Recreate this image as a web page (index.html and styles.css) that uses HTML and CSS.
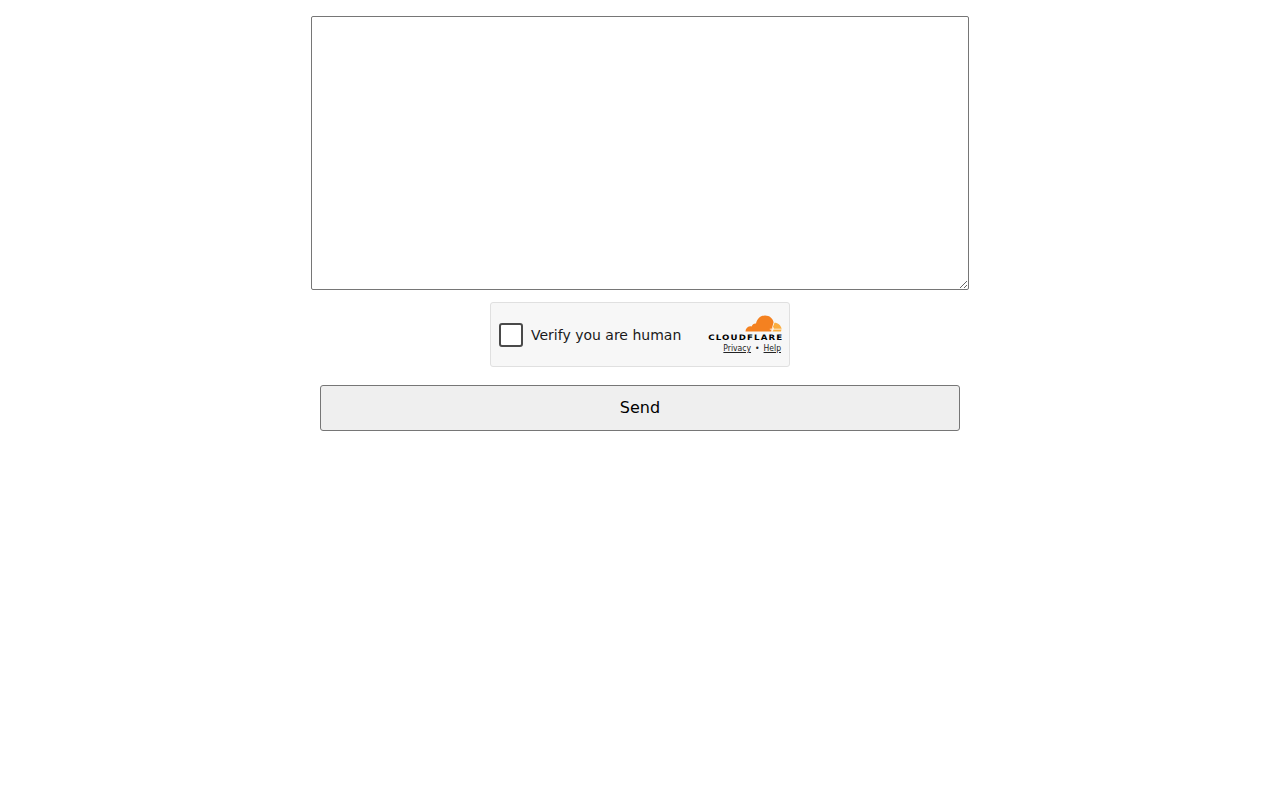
FILE: index.html
```html
<!DOCTYPE html>
<html lang="en">
<head>
<meta charset="utf-8">
<title>Send</title>
<link rel="stylesheet" href="styles.css">
</head>
<body>
<form class="form">
  <textarea class="message"></textarea>
  <div class="widget">
    <label class="verify">
      <span class="box"></span>
      <span class="verify-text">Verify you are human</span>
    </label>
    <div class="brand">
      <svg class="cloud" width="37" height="17" viewBox="0 0 37 17" aria-hidden="true">
        <path fill="#f48120" d="M0.5 16.5 C0.5 13.6 2.5 11.4 5 11.2 C5.6 11.2 6.2 11.3 6.6 11.5 C7.4 9.4 9 8.4 11 8.6 C12 3.8 15.6 0.5 20 0.5 C24.6 0.5 27.8 3.4 28.6 7.2 L27.4 11.6 L26 16.5 Z"/>
        <path fill="#faad3f" d="M29.5 7.8 C33 7.8 36 10.4 36.6 13.8 L36 16.5 L26.6 16.5 L27.4 14 C27.8 12.8 28.2 11 29.5 7.8 Z"/>
        <path fill="#fff" d="M26.9 16.5 L28.1 12.4 L28.9 12.4 L27.9 16.5 Z M24.8 13.7 L36.8 13.7 L36.8 14.4 L24.8 14.4 Z"/>
      </svg>
      <div class="wordmark">CLOUDFLARE</div>
      <div class="links"><a class="link" href="#">Privacy</a><span class="dot">•</span><a class="link" href="#">Help</a></div>
    </div>
  </div>
  <button class="send" type="button">Send</button>
</form>
</body>
</html>
```
FILE: styles.css
```css
html, body {
  margin: 0;
  background: #fff;
}
.form {
  display: flex;
  flex-direction: column;
  align-items: center;
  padding-top: 16px;
  font-family: "DejaVu Sans", sans-serif;
}
.message {
  display: block;
  box-sizing: border-box;
  width: 658px;
  height: 274px;
  margin: 0;
  padding: 2px;
  border: 1px solid #767676;
  border-radius: 2px;
  background: #fff;
}
.widget {
  box-sizing: border-box;
  display: flex;
  justify-content: space-between;
  align-items: center;
  width: 300px;
  height: 65px;
  margin-top: 12px;
  padding: 0 7px 0 8px;
  background: #f7f7f7;
  border: 1px solid #e0e0e0;
  border-radius: 3px;
}
.verify {
  display: flex;
  align-items: center;
  gap: 8px;
}
.box {
  box-sizing: border-box;
  width: 24px;
  height: 24px;
  background: #fff;
  border: 2px solid #4a4a4a;
  border-radius: 3px;
}
.verify-text {
  font-size: 14px;
  color: #1a1a1a;
}
.brand {
  display: flex;
  flex-direction: column;
  align-items: flex-end;
  width: 75px;
  padding-bottom: 1px;
}
.cloud {
  display: block;
  margin-right: 0;
}
.wordmark {
  margin-top: 1px;
  margin-right: -1px;
  font-size: 7.5px;
  line-height: 9px;
  font-weight: 700;
  letter-spacing: 1px;
  color: #000;
  white-space: nowrap;
  transform: scaleX(1.15);
  transform-origin: right center;
}
.links {
  display: flex;
  align-items: center;
  gap: 4px;
  margin-top: 1px;
  margin-right: 1px;
  font-family: "DejaVu Sans Condensed", "DejaVu Sans", sans-serif;
  font-stretch: condensed;
  font-size: 8.5px;
  line-height: 10px;
  color: #232323;
}
.link {
  color: #232323;
  text-decoration: underline;
}
.send {
  display: block;
  box-sizing: border-box;
  width: 640px;
  height: 46px;
  margin-top: 18px;
  padding: 0 0 2px;
  font-family: "DejaVu Sans", sans-serif;
  font-size: 16px;
  color: #000;
  background: #efefef;
  border: 1px solid #767676;
  border-radius: 3px;
}
```
